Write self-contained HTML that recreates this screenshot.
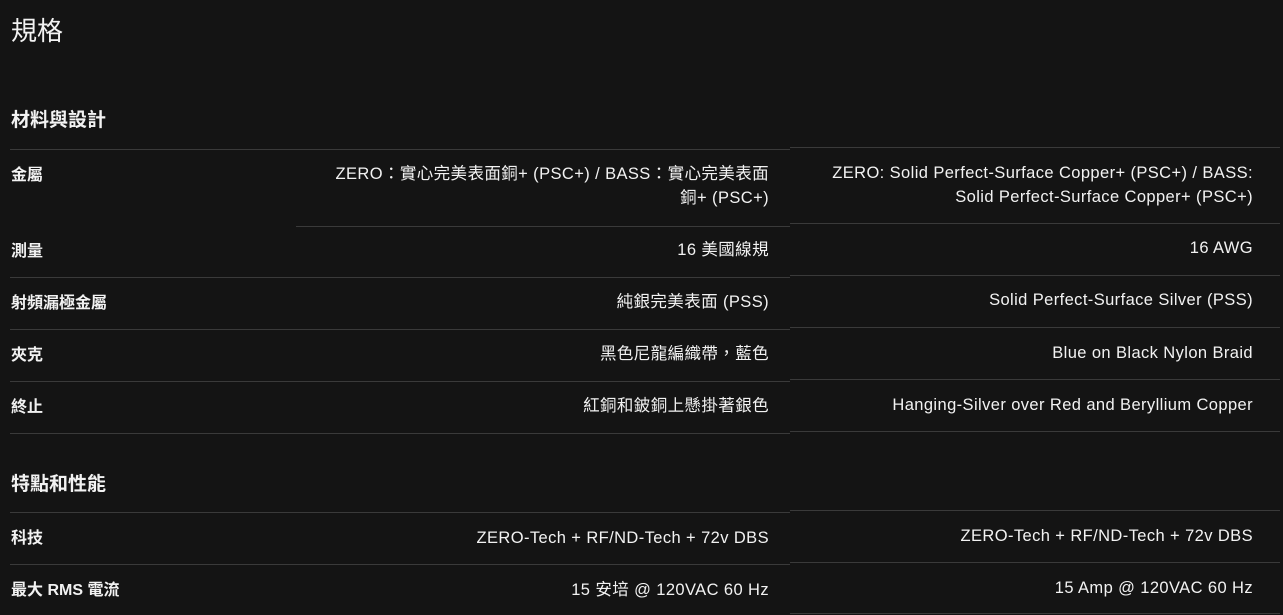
<!DOCTYPE html>
<html><head><meta charset="utf-8"><style>
html,body{margin:0;padding:0;background:#141414;width:1283px;height:615px;overflow:hidden}
body{position:relative;font-family:"Liberation Sans","Noto Sans CJK TC",sans-serif;color:#f2f2f2}
.a{position:absolute;white-space:nowrap}
.l{position:absolute;height:1px;background:#3a3a3a}
.lab{font-weight:bold;font-size:16px;left:11px}
.vl{right:514px;text-align:right;font-size:16.5px;line-height:24px;letter-spacing:0.4px}
.vr{right:30px;text-align:right;font-size:16.5px;line-height:24px;letter-spacing:0.4px}
.h{font-weight:bold;font-size:19px;left:11px}
</style></head><body>
<div class="a" style="left:11px;top:14px;font-size:26px;line-height:34px">規格</div>
<div class="a h" style="top:105px">材料與設計</div>

<div class="l" style="left:10px;width:780px;top:149px"></div>
<div class="l" style="left:790px;width:490px;top:147px"></div>
<div class="a lab" style="top:161px">金屬</div>
<div class="a vl" style="top:162px">ZERO：實心完美表面銅+ (PSC+) / BASS：實心完美表面<br>銅+ (PSC+)</div>
<div class="a vr" style="top:161px">ZERO: Solid Perfect-Surface Copper+ (PSC+) / BASS:<br>Solid Perfect-Surface Copper+ (PSC+)</div>
<div class="l" style="left:296px;width:494px;top:226px"></div>
<div class="l" style="left:790px;width:490px;top:223px"></div>

<div class="a lab" style="top:237px">測量</div>
<div class="a vl" style="top:238px">16 美國線規</div>
<div class="a vr" style="top:236px">16 AWG</div>
<div class="l" style="left:10px;width:780px;top:277px"></div>
<div class="l" style="left:790px;width:490px;top:275px"></div>

<div class="a lab" style="top:289px">射頻漏極金屬</div>
<div class="a vl" style="top:290px">純銀完美表面 (PSS)</div>
<div class="a vr" style="top:288px">Solid Perfect-Surface Silver (PSS)</div>
<div class="l" style="left:10px;width:780px;top:329px"></div>
<div class="l" style="left:790px;width:490px;top:327px"></div>

<div class="a lab" style="top:341px">夾克</div>
<div class="a vl" style="top:342px">黑色尼龍編織帶，藍色</div>
<div class="a vr" style="top:341px">Blue on Black Nylon Braid</div>
<div class="l" style="left:10px;width:780px;top:381px"></div>
<div class="l" style="left:790px;width:490px;top:379px"></div>

<div class="a lab" style="top:393px">終止</div>
<div class="a vl" style="top:394px">紅銅和鈹銅上懸掛著銀色</div>
<div class="a vr" style="top:393px">Hanging-Silver over Red and Beryllium Copper</div>
<div class="l" style="left:10px;width:780px;top:433px"></div>
<div class="l" style="left:790px;width:490px;top:431px"></div>

<div class="a h" style="top:469px">特點和性能</div>
<div class="l" style="left:10px;width:780px;top:512px"></div>
<div class="l" style="left:790px;width:490px;top:510px"></div>

<div class="a lab" style="top:524px">科技</div>
<div class="a vl" style="top:526px">ZERO-Tech + RF/ND-Tech + 72v DBS</div>
<div class="a vr" style="top:524px">ZERO-Tech + RF/ND-Tech + 72v DBS</div>
<div class="l" style="left:10px;width:780px;top:564px"></div>
<div class="l" style="left:790px;width:490px;top:562px"></div>

<div class="a lab" style="top:576px">最大 RMS 電流</div>
<div class="a vl" style="top:578px">15 安培 @ 120VAC 60 Hz</div>
<div class="a vr" style="top:576px">15 Amp @ 120VAC 60 Hz</div>
<div class="l" style="left:790px;width:490px;top:613px"></div>
</body></html>
